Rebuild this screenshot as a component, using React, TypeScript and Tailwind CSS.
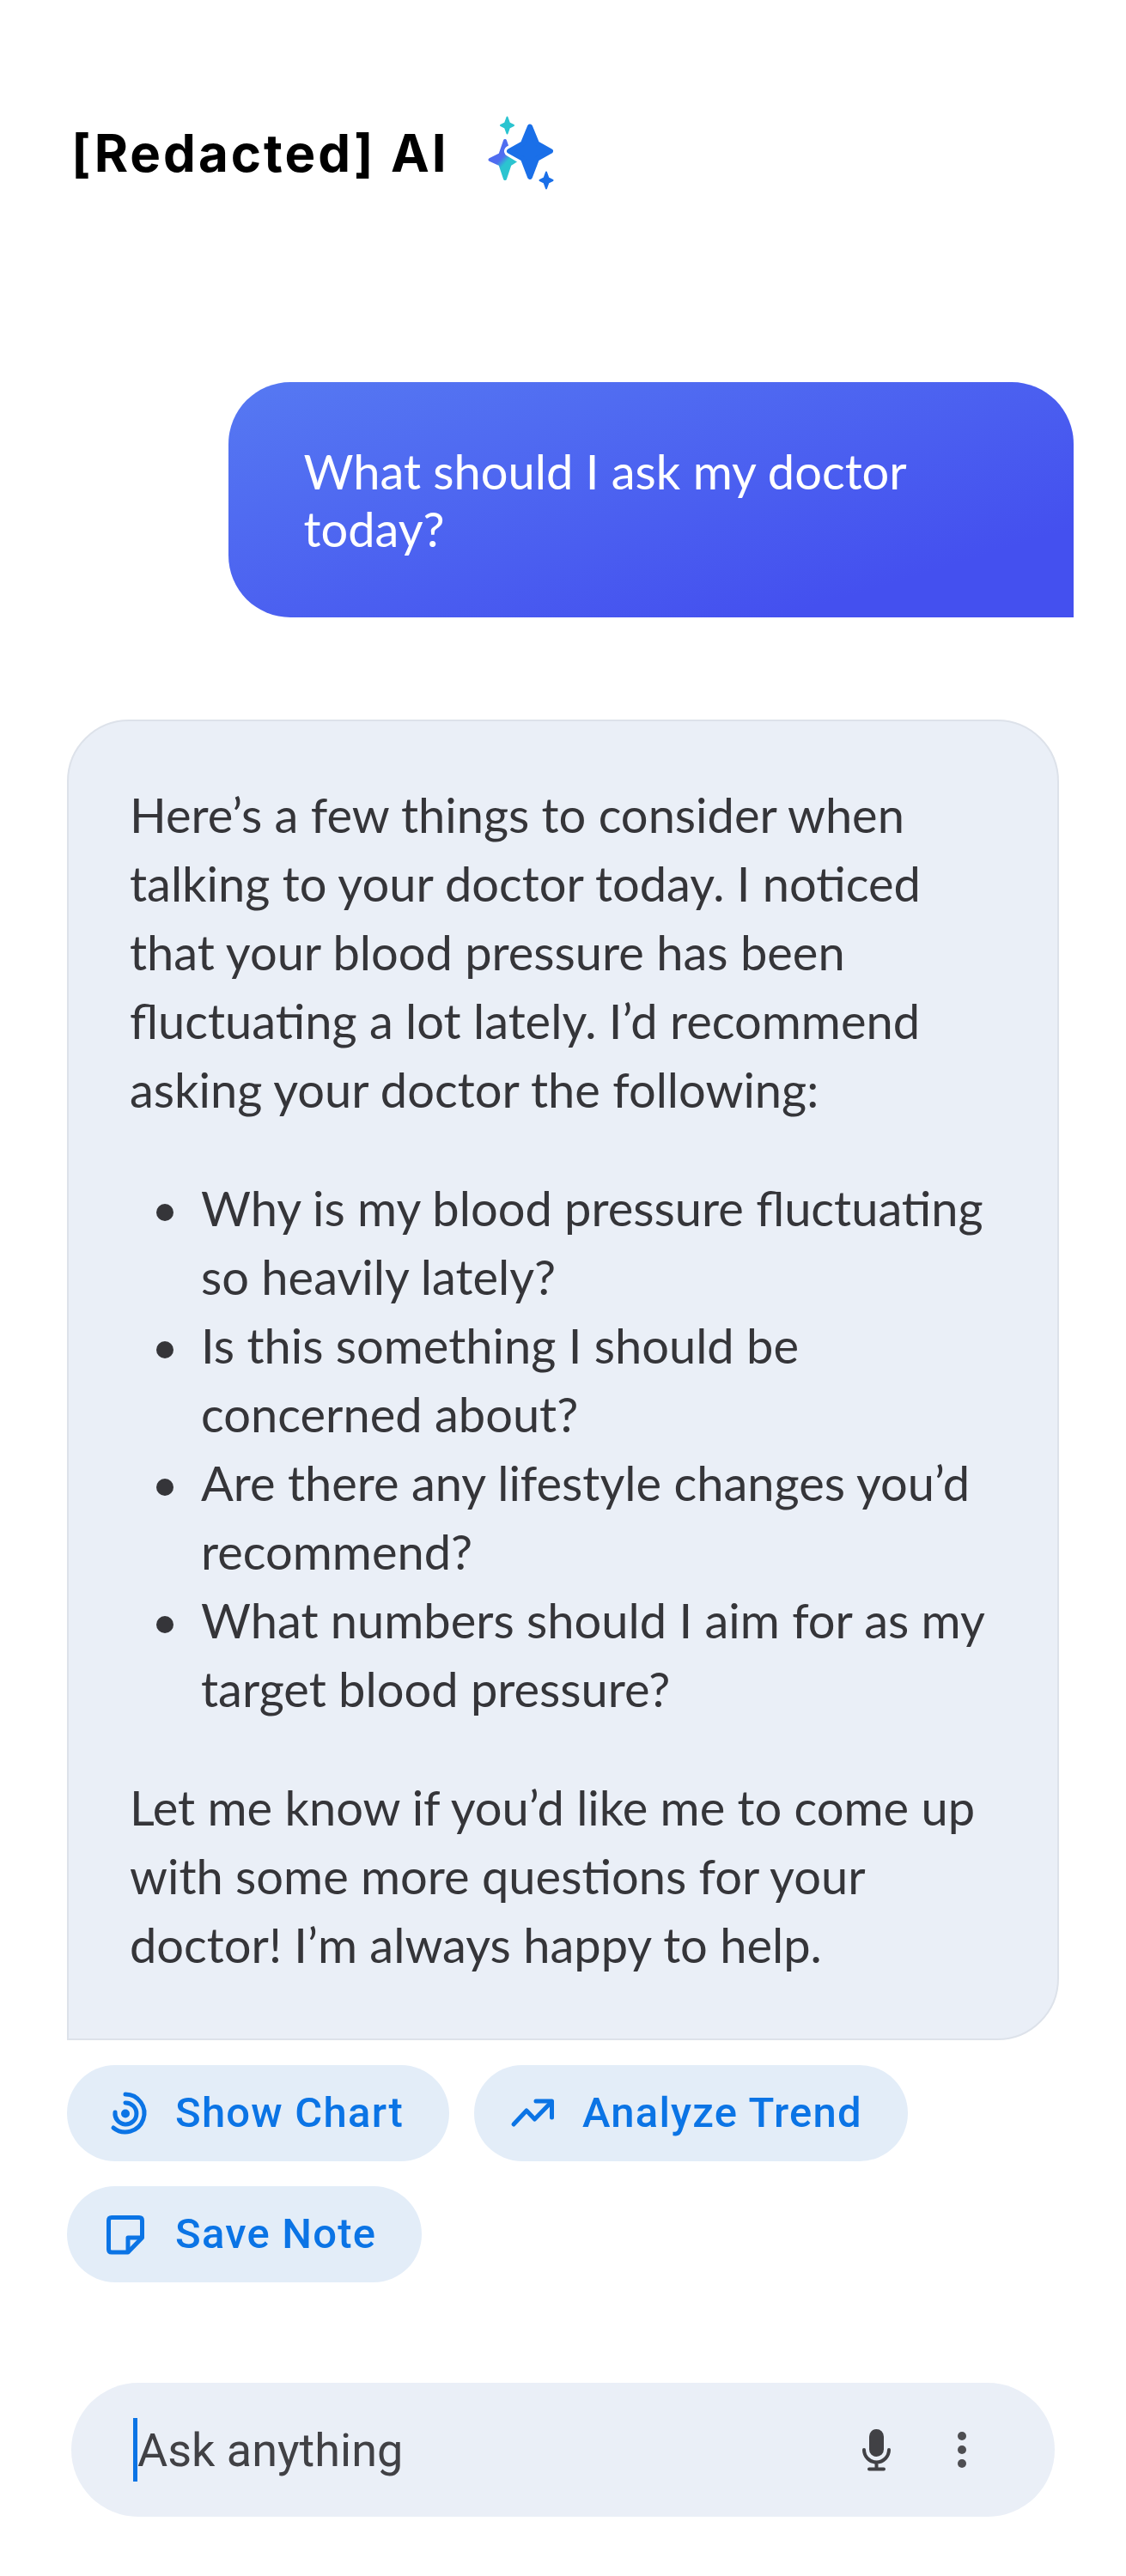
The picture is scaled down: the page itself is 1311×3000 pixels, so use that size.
import type { ReactNode } from "react";

interface Action {
  id: string;
  label: string;
  icon: ReactNode;
}

function SparkleLogo() {
  return (
    <svg width="80" height="90" viewBox="0 0 80 90" aria-hidden="true">
      <defs>
        <linearGradient id="spark" x1="0.3" y1="0.3" x2="0.6" y2="0.7">
          <stop offset="0.4" stopColor="#4f6df0" />
          <stop offset="0.8" stopColor="#2bc4d0" />
        </linearGradient>
      </defs>
      <g strokeLinejoin="round">
        <path d="M22 31 L27.500 47 L36 53 L27.500 58.500 L22 75 L16.500 58.500 L4.500 53 L16.500 47 Z" fill="url(#spark)" stroke="url(#spark)" strokeWidth="4" />
        <path d="M51 15 L60 34 L75 43 L60 52 L51 73 L42 52 L27 43 L42 34 Z" fill="#fff" stroke="#fff" strokeWidth="12" />
        <path d="M51 14.500 L59 34 L75 43 L59 52 L51 73 L43 52 L27 43 L43 34 Z" fill="#1a6fe8" stroke="#1a6fe8" strokeWidth="6" />
        <path d="M24.500 3.500 L27 10.500 L32 13 L27 15.500 L24.500 22.500 L22 15.500 L17 13 L22 10.500 Z" fill="#2bc4d0" stroke="#2bc4d0" strokeWidth="2" />
        <path d="M70 67.500 L72.500 74.500 L77.500 77 L72.500 79.500 L70 86.500 L67.500 79.500 L62.500 77 L67.500 74.500 Z" fill="#1a6fe8" stroke="#1a6fe8" strokeWidth="2" />
      </g>
    </svg>
  );
}

const actions: Action[] = [
  {
    id: "chart",
    label: "Show Chart",
    icon: (
      <svg width="56" height="56" viewBox="0 0 56 56" fill="none" stroke="currentColor" strokeWidth="5" strokeLinecap="round" aria-hidden="true">
        <path d="M28 6 A22 22 0 1 1 14 45" />
        <path d="M28 16 A12.500 12.500 0 1 1 16 27" />
        <circle cx="28" cy="28.500" r="5" fill="currentColor" stroke="none" />
      </svg>
    ),
  },
  {
    id: "trend",
    label: "Analyze Trend",
    icon: (
      <svg width="56" height="56" viewBox="0 0 56 56" fill="none" stroke="currentColor" strokeWidth="5" strokeLinecap="round" strokeLinejoin="round" aria-hidden="true">
        <path d="M6 41 L21 25 L30.500 35 L50 15" />
        <path d="M32 14 H50.500 V33" />
      </svg>
    ),
  },
  {
    id: "note",
    label: "Save Note",
    icon: (
      <svg width="56" height="56" viewBox="0 0 56 56" fill="none" stroke="currentColor" strokeWidth="5" strokeLinejoin="round" aria-hidden="true">
        <path d="M31 49 H12 Q8.500 49 8.500 45.500 V12 Q8.500 8.500 12 8.500 H44 Q47.500 8.500 47.500 12 V32 Z" />
        <path d="M31 49 V32 H47.500" />
      </svg>
    ),
  },
];

const questions = [
  "Why is my blood pressure fluctuating so heavily lately?",
  "Is this something I should be concerned about?",
  "Are there any lifestyle changes you’d recommend?",
  "What numbers should I aim for as my target blood pressure?",
];

export default function App() {
  return (
    <div className="bg-white pb-[69px] font-['Lato',sans-serif] text-[56px]">
      {/* Header */}
      <header className="flex items-center gap-[43px] px-[83px] pt-[133px]">
        <h1 className="font-['Inter',sans-serif] text-[60px] leading-[90px] font-bold tracking-wider text-black">[Redacted] AI</h1>
        <SparkleLogo />
      </header>

      {/* Conversation */}
      <main className="mt-[222px] pr-[61px] pl-[78px]">
        <div className="ml-auto w-[84%] rounded-[72px] rounded-br-none bg-[linear-gradient(163deg,#5679f2_0%,#4450ef_82%)] px-[88px] py-[70px] leading-[67px] text-white">
          What should I ask my doctor today?
        </div>

        <div className="mt-[119px] mr-[17px] rounded-[72px] rounded-bl-none border-2 border-[#dde2ea] bg-[#eaeff7] px-[71px] py-[69px] leading-[80px] text-[#353539]">
          <p>
            Here’s a few things to consider when talking to your doctor today. I noticed that your blood
            pressure has been fluctuating a lot lately. I’d recommend asking your doctor the following:
          </p>
          <ul className="my-[58px] pl-[31px]">
            {questions.map((q) => (
              <li key={q} className="flex gap-8">
                <span className="mt-[35px] size-5 shrink-0 rounded-full bg-[#353539]" />
                <span>{q}</span>
              </li>
            ))}
          </ul>
          <p>Let me know if you’d like me to come up with some more questions for your doctor! I’m always happy to help.</p>
        </div>

        {/* Quick actions */}
        <div className="mt-[29px] flex flex-wrap gap-[29px] font-['Roboto',sans-serif]">
          {actions.map((a) => (
            <button
              key={a.id}
              type="button"
              className="flex h-28 items-center gap-[30px] rounded-full bg-[#e3edf8] pr-[53px] pl-10 text-[49px] font-medium tracking-wide text-[#0b74e5]"
            >
              {a.icon}
              {a.label}
            </button>
          ))}
        </div>
      </main>

      {/* Composer */}
      <form className="mt-[117px] mr-[83px] ml-[83px] flex h-[156px] items-center rounded-full bg-[#eaeff7] pr-[83px] pl-[72px]">
        <span className="h-[74px] w-[5px] bg-[#0b74e5]" />
        <input
          type="text"
          aria-label="Ask anything"
          placeholder="Ask anything"
          className="h-20 min-w-0 flex-1 bg-transparent font-['Roboto',sans-serif] text-[54px] text-[#414145] outline-none placeholder:text-[#414145]"
        />
        <button type="button" aria-label="Voice input" className="mr-[50px] text-[#414145]">
          <svg width="50" height="56" viewBox="0 0 50 56" fill="none" stroke="currentColor" strokeLinecap="round">
            <rect x="17" y="4" width="17" height="32" rx="8.500" fill="currentColor" stroke="none" />
            <path d="M11 28 A14.500 14.500 0 0 0 40 28 M25.500 43 V50 M17 50.500 H34" strokeWidth="4" />
          </svg>
        </button>
        <button type="button" aria-label="More options" className="text-[#4e4e52]">
          <svg width="50" height="56" viewBox="0 0 50 56" fill="currentColor">
            <circle cx="25" cy="12" r="5" />
            <circle cx="25" cy="28" r="5" />
            <circle cx="25" cy="44" r="5" />
          </svg>
        </button>
      </form>
    </div>
  );
}
